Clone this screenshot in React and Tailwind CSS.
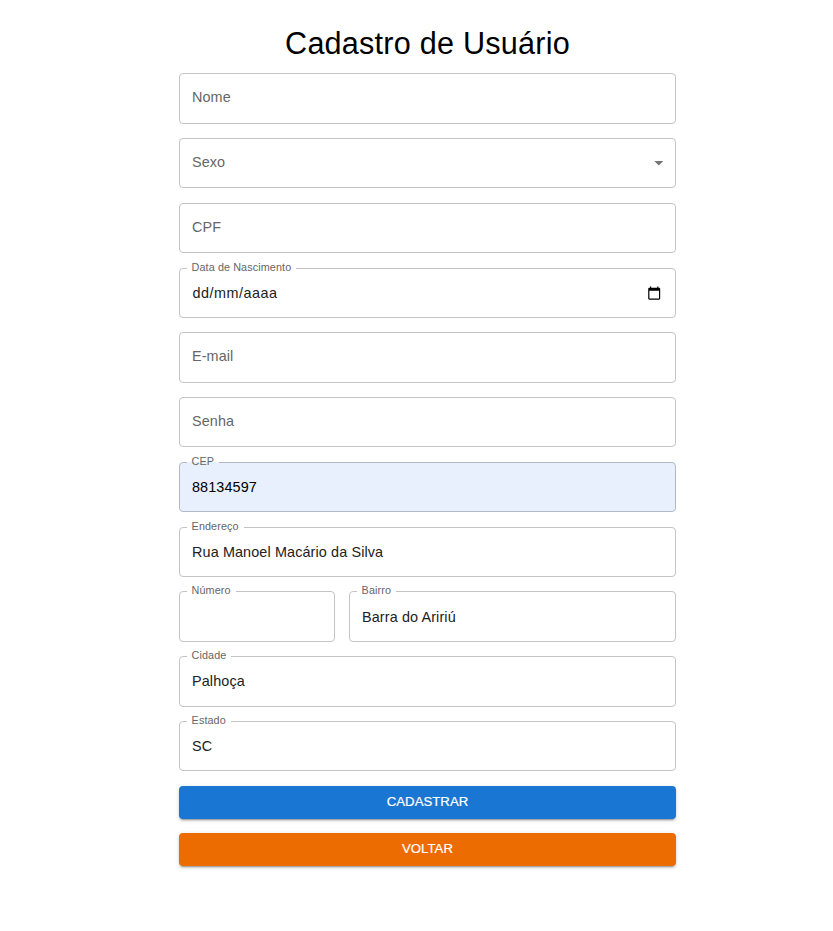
function Field({ label, value, filled = false, box, valueClass = "", labelClass = "mb-[2px]", children }) {
  const floating = value !== undefined;
  return (
    <div
      className={`relative flex items-center rounded-[4px] border px-[12px] ${
        filled ? "border-[#b2b8c6] bg-[#e8f0fe]" : "border-[#c4c4c4] bg-white"
      } ${box}`}
    >
      {floating ? (
        <>
          <span
            className={`absolute -top-[8px] left-[7px] flex h-[14px] items-start pr-[5px] pl-[4.6px] text-[10.8px] leading-[13px] tracking-[0.101px] whitespace-nowrap text-[#666666] ${
              filled
                ? "bg-[linear-gradient(to_bottom,#ffffff_7px,#e8f0fe_7px)]"
                : "bg-white"
            }`}
          >
            {label}
          </span>
          <span
            className={`text-[14.4px] leading-[20px] ${
              filled ? "text-black" : "text-[#212121]"
            } ${valueClass || "tracking-[0.12px]"}`}
          >
            {value}
          </span>
        </>
      ) : (
        <span
          className={`text-[14.4px] leading-[20px] tracking-[0.1px] text-[#666666] ${labelClass}`}
        >
          {label}
        </span>
      )}
      {children}
    </div>
  );
}

function ArrowDropDown() {
  return (
    <svg
      className="absolute top-[13px] right-[5.5px] h-[21.6px] w-[21.6px] text-[#757575]"
      viewBox="0 0 24 24"
      fill="currentColor"
    >
      <path d="M7 10l5 5 5-5z" />
    </svg>
  );
}

function CalendarIcon() {
  return (
    <svg
      className="absolute top-[17px] right-[13.5px] h-[14.4px] w-[14.4px] text-black"
      viewBox="0 0 24 24"
      fill="currentColor"
    >
      <path d="M20 3h-1V1h-2v2H7V1H5v2H4c-1.1 0-2 .9-2 2v16c0 1.1.9 2 2 2h16c1.1 0 2-.9 2-2V5c0-1.1-.9-2-2-2zm0 18H4V8h16v13z" />
    </svg>
  );
}

function Button({ color, children }) {
  return (
    <button
      className={`flex h-[33px] w-full items-center justify-center rounded-[4px] pb-[1px] text-[13.2px] leading-[22px] font-medium tracking-[0.02px] text-white [-webkit-text-stroke:0.2px_white] shadow-[0px_3px_1px_-2px_rgba(0,0,0,0.2),0px_2px_2px_0px_rgba(0,0,0,0.14),0px_1px_5px_0px_rgba(0,0,0,0.12)] ${color}`}
    >
      {children}
    </button>
  );
}

export default function App() {
  return (
    <div className="min-h-[931px] w-[833px] bg-white pt-[24px] font-['Liberation_Sans',Arial,sans-serif]">
      <main className="ml-[179px] flex w-[497px] flex-col">
        <h1 className="mb-[11px] h-[38px] text-center text-[30.6px] leading-[38px] tracking-[0.225px] whitespace-nowrap text-black">
          Cadastro de Usuário
        </h1>
        <Field label="Nome" labelClass="mb-[4px]" box="h-[51px]" />
        <Field label="Sexo" box="mt-[14px] h-[50px]">
          <ArrowDropDown />
        </Field>
        <Field label="CPF" box="mt-[15px] h-[50px]" />
        <Field
          label="Data de Nascimento"
          value="dd/mm/aaaa"
          valueClass="pl-[0.5px] tracking-[0.5px]"
          box="mt-[15px] h-[50px]"
        >
          <CalendarIcon />
        </Field>
        <Field label="E-mail" labelClass="mb-[4px]" box="mt-[14px] h-[51px]" />
        <Field label="Senha" box="mt-[14px] h-[50px]" />
        <Field label="CEP" value="88134597" filled box="mt-[15px] h-[50px]" />
        <Field label="Endereço" value="Rua Manoel Macário da Silva" box="mt-[15px] h-[50px]" />
        <div className="mt-[14px] flex gap-[14px]">
          <Field label="Número" value="" box="h-[51px] w-[156px]" />
          <Field label="Bairro" value="Barra do Aririú" box="h-[51px] flex-1" />
        </div>
        <Field
          label="Cidade"
          value="Palhoça"
          valueClass="mb-[2px] tracking-[0.12px]"
          box="mt-[14px] h-[51px]"
        />
        <Field label="Estado" value="SC" box="mt-[14px] h-[50px]" />
        <div className="mt-[15px] flex flex-col gap-[14px]">
          <Button color="bg-[#1976d2]">CADASTRAR</Button>
          <Button color="bg-[#ed6c02]">VOLTAR</Button>
        </div>
      </main>
    </div>
  );
}
